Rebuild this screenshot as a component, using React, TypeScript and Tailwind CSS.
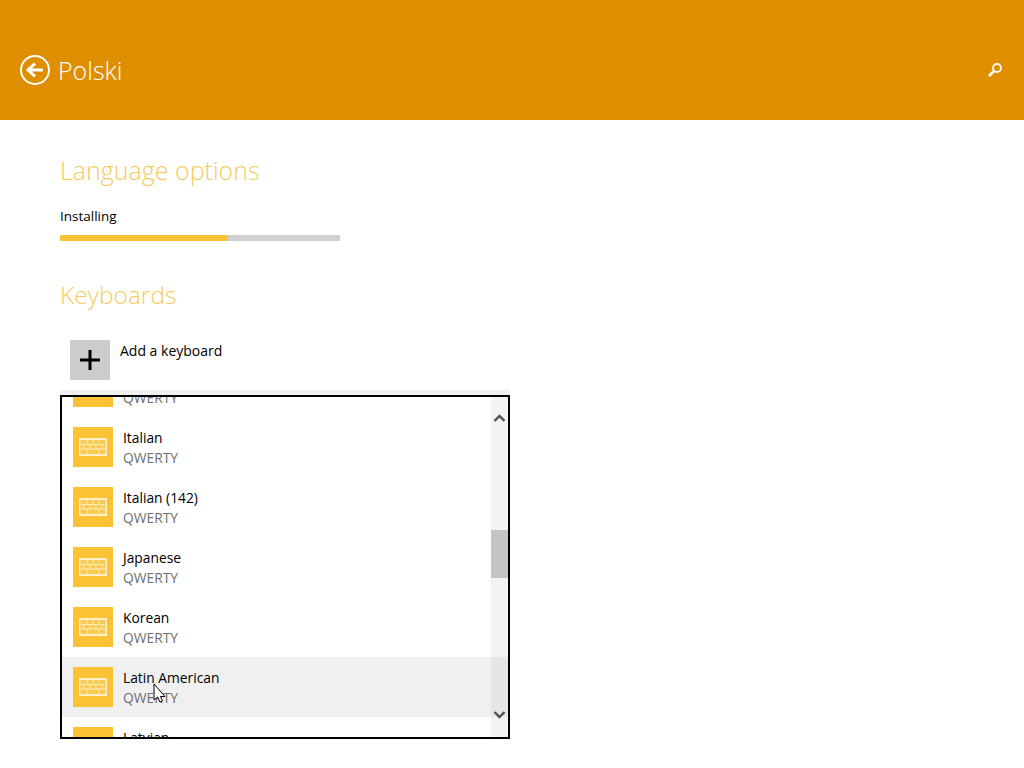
import React from 'react';

const KEYBOARDS = [
  { name: 'Irish', layout: 'QWERTY' },
  { name: 'Italian', layout: 'QWERTY' },
  { name: 'Italian (142)', layout: 'QWERTY' },
  { name: 'Japanese', layout: 'QWERTY' },
  { name: 'Korean', layout: 'QWERTY' },
  { name: 'Latin American', layout: 'QWERTY', hovered: true },
  { name: 'Latvian', layout: 'QWERTY' },
];

const KeyboardIcon = () => (
  <svg width="28" height="18" viewBox="0 0 28 18">
    <rect x="0" y="0" width="28" height="18" fill="#fdf0c4" />
    <rect x="1.5" y="2" width="25" height="14" fill="#fbc94f" />
    <path
      d="M2 6.5H26M2 11H26M8 2V6.5M14 2V6.5M20 2V6.5M5 6.5V11M11 6.5V11M17 6.5V11M23 6.5V11M8 11V16M20 11V16"
      stroke="#fdf0c4"
      strokeWidth="0.9"
      fill="none"
    />
  </svg>
);

const KeyboardRow = ({ name, layout, hovered }: { name: string; layout: string; hovered?: boolean }) => (
  <div className={`flex h-[60px] items-start pl-[11px] pt-[10px] ${hovered ? 'bg-[#f0f0f0]' : ''}`}>
    <div className="flex h-10 w-10 shrink-0 items-center justify-center bg-[#fbc236]">
      <KeyboardIcon />
    </div>
    <div className="ml-[10px] pt-[1px] text-[13.8px] leading-[20px]">
      <div className="text-black">{name}</div>
      <div className="text-[#6e6e6e]">{layout}</div>
    </div>
  </div>
);

export default function App() {
  return (
    <div className="relative h-[768px] w-[1024px] overflow-hidden bg-white font-['Open_Sans','Noto_Sans',sans-serif]">
      {/* Header */}
      <header className="flex h-[120px] items-center justify-between bg-[#df8e00] pl-[20px] pr-[21px] pt-[20px]">
        <div className="flex items-center gap-[8px]">
          <svg width="30" height="30" viewBox="0 0 30 30" fill="none" stroke="#fff" strokeWidth="2">
            <circle cx="15" cy="15" r="14" />
            <path d="M23 15H9M15 8.5L8 15L15 21.5" strokeWidth="3" />
          </svg>
          <span className="text-[25px] font-light leading-[30px] text-white">Polski</span>
        </div>
        <svg width="16" height="16" viewBox="0 0 16 16" fill="none" stroke="#fff">
          <circle cx="10" cy="6" r="4" strokeWidth="1.8" />
          <path d="M7 9L2 14" strokeWidth="2.6" />
        </svg>
      </header>

      {/* Language options */}
      <main className="pl-[60px]">
        <h1 className="mt-[32px] text-[25px] font-light leading-[36px] text-[#f6cb5c]">Language options</h1>
        <p className="mt-[18px] text-[13.5px] leading-[20px] text-black">Installing</p>
        <div className="mt-[9px] h-[6px] w-[280px] bg-[#d0d0d0]">
          <div className="h-full w-[168px] bg-[#f7c233]" />
        </div>

        <h2 className="mt-[36px] text-[24.5px] font-light leading-[36px] text-[#f6cb5c]">Keyboards</h2>

        <div className="ml-[10px] mt-[27px] flex items-start gap-[10px]">
          <div className="flex h-10 w-10 items-center justify-center bg-[#cccccc]">
            <svg width="20" height="20" viewBox="0 0 20 20">
              <path d="M10 0V20M0 10H20" stroke="#000" strokeWidth="3" />
            </svg>
          </div>
          <span className="text-[14px] leading-[22px] text-black">Add a keyboard</span>
        </div>
        <div className="mt-[10px] h-[5px] w-[450px] bg-[#f0f0f0]" />
      </main>

      {/* Keyboard picker flyout */}
      <div className="absolute left-[60px] top-[395px] flex h-[344px] w-[450px] overflow-hidden border-2 border-black bg-white">
        <div className="h-full min-w-0 flex-1 overflow-hidden">
          <div className="-mt-[40px]">
            {KEYBOARDS.map((k) => (
              <KeyboardRow key={k.name} {...k} />
            ))}
          </div>
        </div>
        <div className="relative h-full w-[17px] shrink-0 bg-[#f3f3f3]">
          <svg className="absolute left-[2px] top-[16px]" width="13" height="10" viewBox="0 0 13 10" fill="none">
            <path d="M1.5 8L6.5 3L11.5 8" stroke="#505050" strokeWidth="2.4" />
          </svg>
          <div className="absolute left-0 top-[133px] h-[48px] w-full bg-[#c4c4c4]" />
          <div className="absolute left-0 top-[260px] h-[60px] w-full bg-[#e6e6e6]" />
          <svg className="absolute left-[2px] top-[313px]" width="13" height="10" viewBox="0 0 13 10" fill="none">
            <path d="M1.5 2L6.5 7L11.5 2" stroke="#505050" strokeWidth="2.4" />
          </svg>
        </div>
      </div>

      {/* Mouse cursor */}
      <svg className="absolute left-[153px] top-[683px]" width="13" height="20" viewBox="0 0 13 20">
        <path d="M1 1V17L4.5 14L7 19L9.5 18L7.5 13.5H12Z" fill="#fff" stroke="#000" strokeWidth="1" />
      </svg>
    </div>
  );
}
